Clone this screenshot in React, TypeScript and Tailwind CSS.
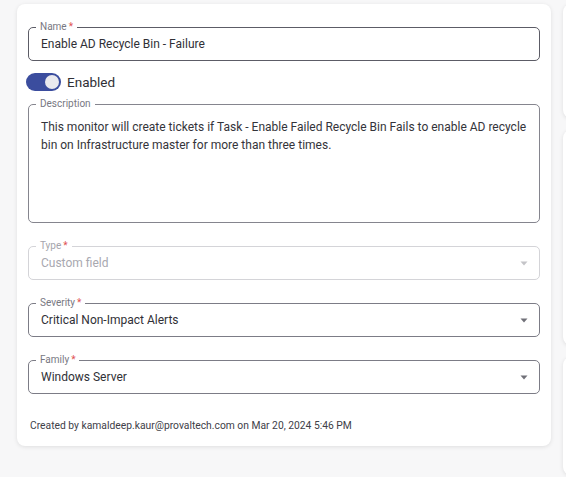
const FONT = { fontFamily: 'Roboto, "Noto Sans", sans-serif' };

function Caret({ disabled }: { disabled?: boolean }) {
  return (
    <svg width="8" height="5" viewBox="0 0 8 5" className="shrink-0">
      <path d="M0.5 0.5 L7.5 0.5 L4 4.5 Z" fill={disabled ? '#c4c4c8' : '#707078'} />
    </svg>
  );
}

function Label({ text, required, disabled }: { text: string; required?: boolean; disabled?: boolean }) {
  return (
    <span
      className={`absolute -top-[7px] left-[7px] bg-white px-[4px] text-[10px] leading-[12px] ${
        disabled ? 'text-[#a5a5ad]' : 'text-[#787882]'
      }`}
    >
      {text}
      {required && <span className="ml-[2px] text-[#e05252]">*</span>}
    </span>
  );
}

function SelectField({ label, value, disabled }: { label: string; value: string; disabled?: boolean }) {
  return (
    <div
      className={`relative flex h-[34px] items-center justify-between rounded-[5px] border pl-[12px] pr-[11px] ${
        disabled ? 'border-[#d4d4d8]' : 'border-[#7c7c86]'
      }`}
    >
      <Label text={label} required disabled={disabled} />
      <span className={`text-[12px] ${disabled ? 'text-[#a8a8b0]' : 'text-[#303036]'}`}>{value}</span>
      <Caret disabled={disabled} />
    </div>
  );
}

export default function App() {
  return (
    <div className="flex h-[477px] w-[566px] overflow-hidden bg-[#f7f7f8]" style={FONT}>
      <div className="ml-[17px] mt-[4px] flex h-[442px] w-[534px] shrink-0 flex-col rounded-[8px] bg-white px-[11px] pt-[23px] shadow-[0_1px_4px_rgba(0,0,0,0.10)]">
        <div className="relative flex h-[34px] items-center rounded-[5px] border border-[#5c5c66] px-[12px]">
          <Label text="Name" required />
          <span className="text-[12px] text-[#303036]">Enable AD Recycle Bin - Failure</span>
        </div>

        <div className="mt-[12px] flex h-[18px] items-center gap-[6px]">
          <div className="-ml-[2px] flex h-[18px] w-[35px] items-center justify-end rounded-full bg-[#3b4d9e] pr-[2px]">
            <div className="h-[14px] w-[14px] rounded-full bg-[#e9e9ee]" />
          </div>
          <span className="text-[13.5px] text-[#303036]">Enabled</span>
        </div>

        <div className="relative mt-[13px] h-[119px] rounded-[5px] border border-[#85858e] px-[12px] pt-[14px]">
          <Label text="Description" />
          <p className="text-[12px] leading-[17.5px] text-[#34343a]">
            This monitor will create tickets if Task - Enable Failed Recycle Bin Fails to enable AD recycle bin on
            Infrastructure master for more than three times.
          </p>
        </div>

        <div className="mt-[23px] flex flex-col gap-[23px]">
          <SelectField label="Type" value="Custom field" disabled />
          <SelectField label="Severity" value="Critical Non-Impact Alerts" />
          <SelectField label="Family" value="Windows Server" />
        </div>

        <p className="ml-[2px] mt-[24px] text-[10.3px] text-[#404048]">
          Created by kamaldeep.kaur@provaltech.com on Mar 20, 2024 5:46 PM
        </p>
      </div>

      <div className="ml-[12px] flex w-[200px] shrink-0 flex-col gap-[12px] pt-[4px]">
        <div className="h-[114px] rounded-[8px] bg-white shadow-[0_1px_4px_rgba(0,0,0,0.10)]" />
        <div className="h-[215px] rounded-[8px] bg-white shadow-[0_1px_4px_rgba(0,0,0,0.10)]" />
        <div className="h-[118px] rounded-[8px] bg-white shadow-[0_1px_4px_rgba(0,0,0,0.10)]" />
      </div>
    </div>
  );
}
